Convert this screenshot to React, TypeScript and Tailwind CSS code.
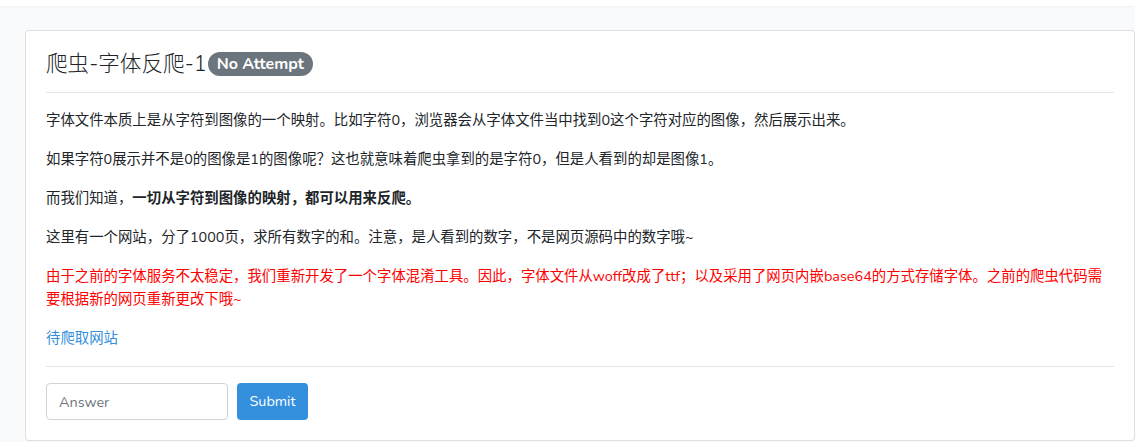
import React from "react";

export default function App() {
  const font = { fontFamily: "Nunito, Lato, 'Noto Sans CJK SC', sans-serif" };
  return (
    <div
      className="min-h-[442px] w-[1135px] bg-[#f8fafc] text-[#212529] font-['Nunito','Lato','Noto_Sans_CJK_SC',sans-serif]"
      style={font}
    >
      <div className="h-[6px] bg-white shadow-[0_1px_2px_rgba(0,0,0,0.04)]" />
      <div className="pl-[25px] pt-[24px]">
        <div className="w-[1110px] rounded-[4px] border border-[rgba(0,0,0,0.125)] bg-white p-5">
          <div className="flex h-[26px] items-center">
            <h4 className="text-[21.6px] leading-[26px] font-light text-[#212529]">爬虫-字体反爬-1</h4>
            <span className="ml-[1px] inline-flex h-[24px] items-center rounded-full bg-[#6c757d] px-[9px] text-[16px] font-bold leading-none text-white">
              No Attempt
            </span>
          </div>
          <hr className="mt-[15px] mb-4 border-0 border-t border-[rgba(0,0,0,0.1)]" />
          <div className="text-[14.4px] leading-[23px]">
            <p className="mb-4">
              字体文件本质上是从字符到图像的一个映射。比如字符0，浏览器会从字体文件当中找到0这个字符对应的图像，然后展示出来。
            </p>
            <p className="mb-4">
              如果字符0展示并不是0的图像是1的图像呢？这也就意味着爬虫拿到的是字符0，但是人看到的却是图像1。
            </p>
            <p className="mb-4">
              而我们知道，<b className="font-bold">一切从字符到图像的映射，都可以用来反爬。</b>
            </p>
            <p className="mb-4">这里有一个网站，分了1000页，求所有数字的和。注意，是人看到的数字，不是网页源码中的数字哦~</p>
            <p className="mb-4 text-[#ff0000]">
              由于之前的字体服务不太稳定，我们重新开发了一个字体混淆工具。因此，字体文件从woff改成了ttf；以及采用了网页内嵌base64的方式存储字体。之前的爬虫代码需要根据新的网页重新更改下哦~
            </p>
            <p className="mb-4">
              <a className="text-[#3490dc]">待爬取网站</a>
            </p>
          </div>
          <hr className="mt-0 mb-4 border-0 border-t border-[rgba(0,0,0,0.1)]" />
          <div className="flex items-center gap-[9px]">
            <input
              className="h-[37px] w-[182px] rounded-[4px] border border-[#ced4da] px-3 text-[14.4px] text-[#495057] placeholder:text-[#6c757d] outline-none"
              placeholder="Answer"
              style={font}
            />
            <button className="h-[37px] w-[71px] rounded-[4px] bg-[#3490dc] text-[14.4px] text-white" style={font}>
              Submit
            </button>
          </div>
        </div>
      </div>
    </div>
  );
}
